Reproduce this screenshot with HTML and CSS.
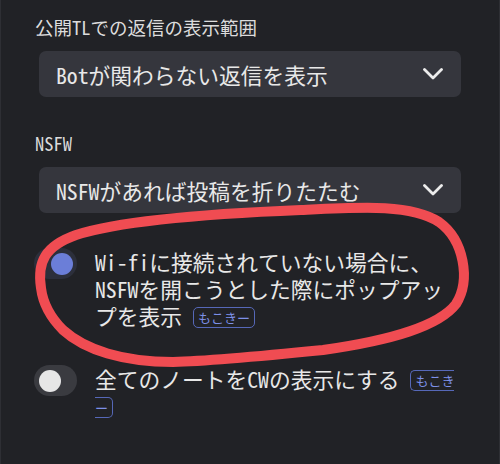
FILE: index.html
```html
<!DOCTYPE html>
<html lang="ja">
<head>
<meta charset="utf-8">
<link rel="stylesheet" href="styles.css">
</head>
<body>
<div class="frame">
  <div class="section">
    <div class="label">公開TLでの返信の表示範囲</div>
    <div class="select">
      <span>Botが関わらない返信を表示</span>
      <svg class="chev" width="20" height="12" viewBox="0 0 20 12"><polyline points="1.5,1.5 10,10 18.5,1.5" fill="none" stroke="#ececec" stroke-width="2.8" stroke-linecap="round" stroke-linejoin="round"/></svg>
    </div>
  </div>
  <div class="section">
    <div class="label">NSFW</div>
    <div class="select">
      <span>NSFWがあれば投稿を折りたたむ</span>
      <svg class="chev" width="20" height="12" viewBox="0 0 20 12"><polyline points="1.5,1.5 10,10 18.5,1.5" fill="none" stroke="#ececec" stroke-width="2.8" stroke-linecap="round" stroke-linejoin="round"/></svg>
    </div>
  </div>
  <div class="toggles">
    <div class="toggle">
      <div class="track on"><div class="knob"></div></div>
      <div class="toggle-text">Wi-fiに接続されていない場合に、NSFWを開こうとした際にポップアップを表示 <span class="badge">もこきー</span></div>
    </div>
    <div class="toggle">
      <div class="track"><div class="knob"></div></div>
      <div class="toggle-text">全てのノートをCWの表示にする <span class="badge">もこきー</span></div>
    </div>
  </div>
  <svg class="scribble" width="500" height="464" viewBox="0 0 500 464">
    <path d="M 40 288 C 36 262, 44 246, 75 235 C 115 222, 200 214, 300 210 C 362 207, 410 204, 438 222 C 463 240, 470 280, 455 304 C 438 326, 392 340, 322 350 C 262 356, 212 361, 172 362 C 122 362, 84 350, 62 330 C 50 318, 42 304, 40 288 Z" fill="none" stroke="#f04c52" stroke-width="10" stroke-linecap="round" stroke-linejoin="round"/>
  </svg>
</div>
</body>
</html>
```

FILE: styles.css
```css
html, body {
  margin: 0;
  padding: 0;
  background: #212226;
}

body {
  width: 500px;
  height: 464px;
  overflow: hidden;
  font-family: "Noto Sans Mono CJK JP", "Noto Sans CJK JP", monospace;
}

.frame {
  position: relative;
  box-sizing: border-box;
  height: 464px;
  border-left: 1px solid #2e2f34;
  border-right: 1px solid #2e2f34;
  padding: 15px 0 0 33px;
}

.section + .section {
  margin-top: 34px;
}

.label {
  margin-left: 1px;
  font-size: 18.5px;
  line-height: 24px;
  color: #dcdcdc;
}

.select {
  margin: 12px 0 0 5px;
  width: 422px;
  height: 46px;
  box-sizing: border-box;
  border-radius: 7px;
  background: #35363d;
  display: flex;
  align-items: center;
  justify-content: space-between;
  padding: 0 18px 0 17px;
  font-size: 21.75px;
  color: #e8e8e8;
  white-space: nowrap;
}

.chev {
  display: block;
}

.toggles {
  margin-top: 35px;
  display: flex;
  flex-direction: column;
  gap: 36px;
}

.toggle {
  display: flex;
  align-items: flex-start;
  gap: 18px;
}

.track {
  position: relative;
  flex: none;
  width: 43px;
  height: 31px;
  border-radius: 16px;
  background: #3a3b40;
}

.track.on {
  background: #2c2f3b;
}

.knob {
  position: absolute;
  top: 4.5px;
  left: 4.5px;
  width: 22px;
  height: 22px;
  border-radius: 50%;
  background: #e6e6e6;
}

.track.on .knob {
  left: auto;
  right: 4.5px;
  background: #6b7ed8;
}

.toggle-text {
  width: 362px;
  font-size: 21.75px;
  line-height: 27px;
  color: #e8e8e8;
  line-break: loose;
}

.badge {
  font-size: 13px;
  line-height: 15px;
  padding: 0 4px;
  border: 1px solid #5668b8;
  border-radius: 5px;
  color: #7d90e8;
  vertical-align: 2px;
}

.scribble {
  position: absolute;
  left: 0;
  top: 0;
  pointer-events: none;
}
```
